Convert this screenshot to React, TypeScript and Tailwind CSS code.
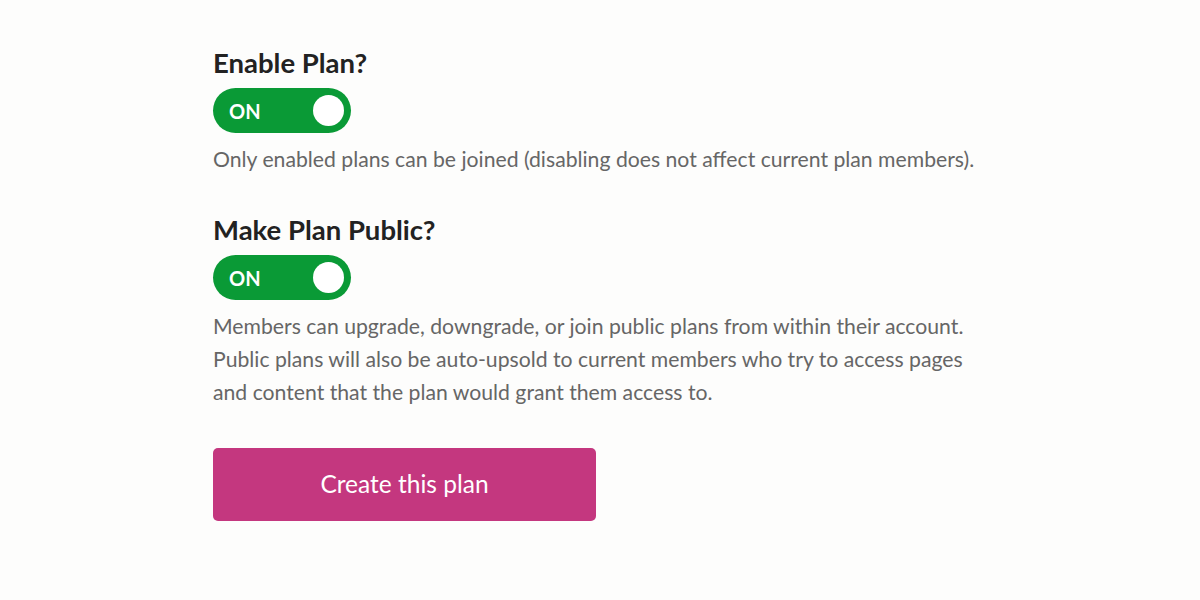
import { useState } from 'react';

function Toggle({ on, onChange }: { on: boolean; onChange: (v: boolean) => void }) {
  return (
    <button
      type="button"
      onClick={() => onChange(!on)}
      className={`mt-[6px] flex h-[45px] w-[138px] items-center justify-between rounded-full pl-4 pr-[7px] ${on ? 'bg-[#0a9a36]' : 'bg-[#9ca3af]'}`}
    >
      <span className="text-[20px] font-bold leading-none text-white">{on ? 'ON' : 'OFF'}</span>
      <span className="h-[31px] w-[31px] rounded-full bg-white" />
    </button>
  );
}

export default function App() {
  const [enabled, setEnabled] = useState(true);
  const [isPublic, setIsPublic] = useState(true);

  return (
    <div className="min-h-[600px] bg-[#fdfdfc] pt-[44px] pl-[213px] font-['Lato','Noto_Sans',sans-serif]">
      <div className="w-[772px]">
        <h2 className="text-[27.5px] font-bold leading-[38px] text-[#222]">Enable Plan?</h2>
        <Toggle on={enabled} onChange={setEnabled} />
        <p className="mt-[10px] text-[21.2px] leading-[33px] text-[#666]">
          Only enabled plans can be joined (disabling does not affect current plan members).
        </p>

        <h2 className="mt-[35px] text-[27.5px] font-bold leading-[38px] text-[#222]">Make Plan Public?</h2>
        <Toggle on={isPublic} onChange={setIsPublic} />
        <p className="mt-[10px] text-[21.2px] leading-[33px] text-[#666]">
          Members can upgrade, downgrade, or join public plans from within their account. Public plans will also be
          auto-upsold to current members who try to access pages and content that the plan would grant them access to.
        </p>

        <button
          type="button"
          className="mt-[39px] h-[73px] w-[383px] rounded-[5px] bg-[#c4377f] text-[24.5px] text-white"
        >
          Create this plan
        </button>
      </div>
    </div>
  );
}
